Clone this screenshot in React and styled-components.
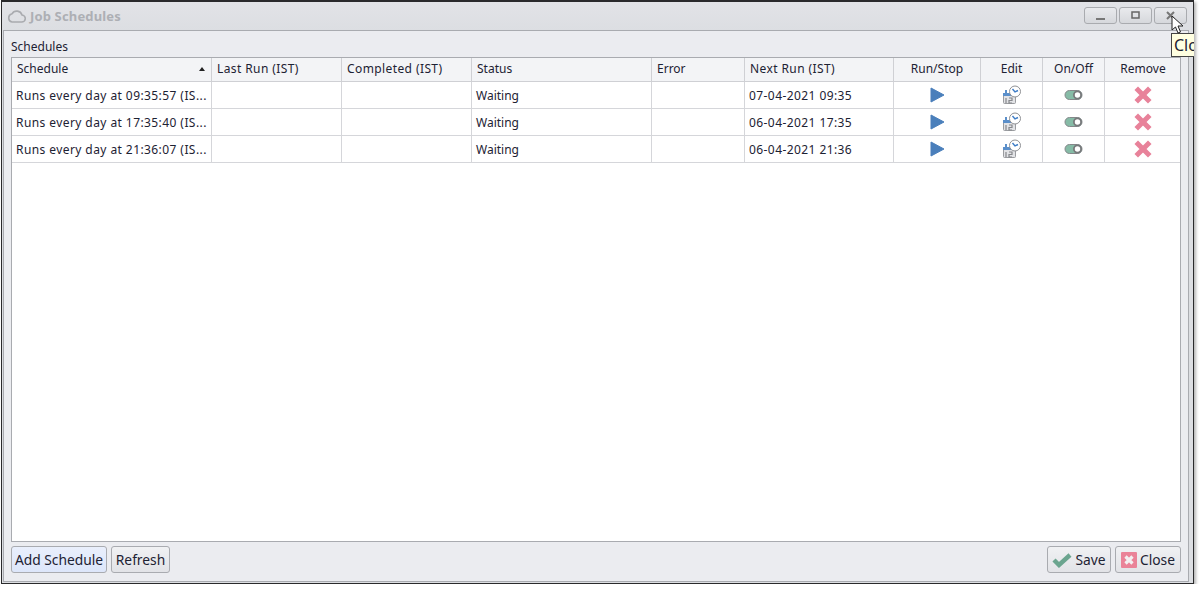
import React from 'react'
import styled, { createGlobalStyle } from 'styled-components'

const columns = [
  { label: 'Schedule', width: 200, sort: true },
  { label: 'Last Run (IST)', width: 130, spaced: true },
  { label: 'Completed (IST)', width: 130, spaced: true },
  { label: 'Status', width: 180 },
  { label: 'Error', width: 93 },
  { label: 'Next Run (IST)', width: 149, spaced: true },
  { label: 'Run/Stop', width: 87, center: true },
  { label: 'Edit', width: 62, center: true },
  { label: 'On/Off', width: 62, center: true },
  { label: 'Remove', width: 76, center: true },
]

const rows = [
  { schedule: 'Runs every day at 09:35:57 (IS...', next: '07-04-2021 09:35' },
  { schedule: 'Runs every day at 17:35:40 (IS...', next: '06-04-2021 17:35' },
  { schedule: 'Runs every day at 21:36:07 (IS...', next: '06-04-2021 21:36' },
]

const PlayIcon = () => (
  <svg width="16" height="16" viewBox="0 0 16 16">
    <path d="M2 1 L15 8 L2 15 Z" fill="#4a7fbb" stroke="#4a7fbb" strokeLinejoin="round" />
  </svg>
)

const EditIcon = () => (
  <svg width="20" height="20" viewBox="0 0 20 20">
    <rect x="1.5" y="9.5" width="12" height="9" rx="1" fill="#e2e3e6" stroke="#9a9ca0" />
    <rect x="1" y="8" width="8" height="3" fill="#5b8fca" />
    <rect x="3" y="5" width="2" height="5" fill="#5b8fca" />
    <path d="M4 13v5M7 13h3v2.5H7V18h3" fill="none" stroke="#85878b" strokeWidth="1.2" />
    <circle cx="13" cy="6.5" r="5.5" fill="#fff" stroke="#8e9094" />
    <path d="M10.5 4 L13 7 L16 5.5" fill="none" stroke="#3d7cc6" strokeWidth="1.4" />
  </svg>
)

const ToggleIcon = () => (
  <svg width="20" height="12" viewBox="0 0 20 12">
    <rect x="1" y="1.5" width="17" height="9" rx="4.5" fill="#86bba6" stroke="#85878a" />
    <circle cx="13.5" cy="6" r="3.6" fill="#fff" stroke="#77797b" strokeWidth="1.8" />
  </svg>
)

const RemoveIcon = () => (
  <svg width="18" height="18" viewBox="0 0 18 18">
    <path d="M4 4 L14 14 M14 4 L4 14" stroke="#e8829a" strokeWidth="5" strokeLinecap="square" />
  </svg>
)

const CheckIcon = () => (
  <svg width="20" height="16" viewBox="0 0 20 16">
    <path d="M2 8 L7 13 L18 3" fill="none" stroke="#6ba58f" strokeWidth="4.4" />
  </svg>
)

const CloseBoxIcon = () => (
  <svg width="16" height="16" viewBox="0 0 16 16">
    <rect width="16" height="16" rx="1" fill="#ea8398" />
    <path d="M4.5 4.5 L11.5 11.5 M11.5 4.5 L4.5 11.5" stroke="#f3f0f1" strokeWidth="3.2" />
  </svg>
)

const App = () => {
  return (
    <>
      <GlobalStyle />
      <Window>
        <TitleBar>
          <TitleLeft>
            <svg width="19" height="14" viewBox="0 0 19 14">
              <path d="M5 13 H14.5 A3.5 3.5 0 0 0 15 6 A5.5 5.5 0 0 0 5 4.8 A4.2 4.2 0 0 0 5 13 Z" fill="none" stroke="#a9abaf" strokeWidth="1.6" />
            </svg>
            <Title>Job Schedules</Title>
          </TitleLeft>
          <WindowButtons>
            <WindowButton $width={33}>
              <svg width="9" height="9" viewBox="0 0 9 9"><rect x="0" y="7" width="9" height="2" fill="#777" /></svg>
            </WindowButton>
            <WindowButton $width={33}>
              <svg width="9" height="9" viewBox="0 0 9 9"><rect x="1" y="1" width="7" height="6" fill="none" stroke="#666" strokeWidth="1.5" /></svg>
            </WindowButton>
            <WindowButton $width={33}>
              <svg width="9" height="9" viewBox="0 0 9 9"><path d="M1 1 L8 8 M8 1 L1 8" stroke="#777" strokeWidth="2" /></svg>
            </WindowButton>
          </WindowButtons>
        </TitleBar>

        <Panel>
          <PanelLabel>Schedules</PanelLabel>
          <Table>
            <HeaderRow>
              {columns.map((col) => (
                <HeaderCell key={col.label} $width={col.width} $center={col.center} $spaced={col.spaced}>
                  {col.label}
                  {col.sort && <SortArrow />}
                </HeaderCell>
              ))}
            </HeaderRow>
            {rows.map((row) => (
              <Row key={row.schedule}>
                <Cell $width={200} $spaced>{row.schedule}</Cell>
                <Cell $width={130} />
                <Cell $width={130} />
                <Cell $width={180}>Waiting</Cell>
                <Cell $width={93} />
                <Cell $width={149} $spaced>{row.next}</Cell>
                <Cell $width={87} $center><PlayIcon /></Cell>
                <Cell $width={62} $center><EditIcon /></Cell>
                <Cell $width={62} $center><ToggleIcon /></Cell>
                <Cell $width={76} $center><RemoveIcon /></Cell>
              </Row>
            ))}
          </Table>
          <Footer>
            <ButtonGroup>
              <Button $width={96} $focused>Add Schedule</Button>
              <Button $width={59}>Refresh</Button>
            </ButtonGroup>
            <ButtonGroup>
              <Button $width={64}><CheckIcon />Save</Button>
              <Button $width={66}><CloseBoxIcon />Close</Button>
            </ButtonGroup>
          </Footer>
        </Panel>

        <Tooltip>Clo</Tooltip>
        <Cursor>
          <svg width="14" height="20" viewBox="0 0 14 20">
            <path d="M1 1 V15 L4.5 12 L7 18 L9.5 17 L7 11 H12 Z" fill="#fff" stroke="#222" strokeWidth="1" />
          </svg>
        </Cursor>
      </Window>
    </>
  )
}

export default App

const GlobalStyle = createGlobalStyle`
  html, body {
    margin: 0;
    padding: 0;
    background-color: #fff;
    overflow: hidden;
  }
  body {
    font-family: "Noto Sans", "Open Sans", sans-serif;
    color: #1d2233;
  }
  * {
    box-sizing: border-box;
  }
`

const Window = styled.div`
  position: relative;
  width: 1193px;
  height: 584px;
  margin: 0 0 0 1px;
  border: 1px solid #2a2a2c;
  border-top-width: 2px;
  background-color: #dcdee2;
  box-shadow: 2px 2px 3px #b5b5b5;
  display: flex;
  flex-direction: column;
`

const TitleBar = styled.div`
  height: 28px;
  display: flex;
  justify-content: space-between;
  align-items: center;
  padding: 0 6px 0 5px;
  background: linear-gradient(#e2e3e7, #dcdee2);
`

const TitleLeft = styled.div`
  display: flex;
  align-items: center;
  gap: 4px;
`

const Title = styled.div`
  font-size: 13px;
  letter-spacing: 0.15px;
  font-weight: 700;
  color: #adafb4;
`

const WindowButtons = styled.div`
  display: flex;
  gap: 2px;
  margin-bottom: 2px;
`

const WindowButton = styled.div`
  width: ${(p) => p.$width}px;
  height: 17px;
  display: flex;
  align-items: center;
  justify-content: center;
  border: 1px solid #a9abaf;
  border-radius: 3px;
  background: linear-gradient(#e9eaed, #d6d8dc);
`

const Panel = styled.div`
  flex: 1;
  margin: 0 4px 1px 1px;
  border: 1px solid #a9abb0;
  background-color: #ebecf0;
  padding: 0 7px;
  display: flex;
  flex-direction: column;
`

const PanelLabel = styled.div`
  height: 26px;
  padding: 7px 0 0 0;
  font-size: 12px;
  line-height: 17px;
`

const Table = styled.div`
  width: 1170px;
  height: 485px;
  border: 1px solid #a9abb0;
  background-color: #fff;
  flex-shrink: 0;
`

const HeaderRow = styled.div`
  display: flex;
  height: 24px;
  background-color: #f3f4f6;
  border-bottom: 1px solid #cfd0d4;
`

const HeaderCell = styled.div`
  position: relative;
  width: ${(p) => p.$width}px;
  flex-shrink: 0;
  padding: 0 5px;
  font-size: 12px;
  line-height: 22px;
  letter-spacing: ${(p) => (p.$spaced ? '0.4px' : '0')};
  text-align: ${(p) => (p.$center ? 'center' : 'left')};
  border-right: 1px solid #cfd0d4;

  &:last-child {
    border-right: none;
  }
`

const SortArrow = styled.span`
  position: absolute;
  right: 6px;
  top: 9px;
  width: 0;
  height: 0;
  border-left: 3.5px solid transparent;
  border-right: 3.5px solid transparent;
  border-bottom: 4px solid #222;
`

const Row = styled.div`
  display: flex;
  height: 27px;
  border-bottom: 1px solid #d5d6da;
`

const Cell = styled.div`
  width: ${(p) => p.$width}px;
  flex-shrink: 0;
  padding: 0 4px;
  display: flex;
  align-items: center;
  justify-content: ${(p) => (p.$center ? 'center' : 'flex-start')};
  font-size: 12px;
  letter-spacing: ${(p) => (p.$spaced ? '0.42px' : '0')};
  white-space: nowrap;
  overflow: hidden;
  border-right: 1px solid #d5d6da;

  &:last-child {
    border-right: none;
  }
`

const Footer = styled.div`
  display: flex;
  justify-content: space-between;
  width: 1170px;
  padding-top: 4px;
`

const ButtonGroup = styled.div`
  display: flex;
  gap: 4px;
`

const Button = styled.button`
  width: ${(p) => p.$width}px;
  height: 27px;
  padding: 0;
  display: flex;
  align-items: center;
  justify-content: center;
  gap: 3px;
  font-family: inherit;
  font-size: 13.8px;
  white-space: nowrap;
  color: #1d2233;
  border: 1px solid #a9abb0;
  border-radius: 3px;
  background: ${(p) => (p.$focused ? 'linear-gradient(#e9effc, #dde6fa)' : 'linear-gradient(#f0f1f3, #e2e3e7)')};
`

const Tooltip = styled.div`
  position: absolute;
  left: 1169px;
  top: 31px;
  width: 23px;
  height: 24px;
  padding-left: 2px;
  overflow: hidden;
  font-size: 16px;
  line-height: 23px;
  color: #1d2233;
  background-color: #ffffe1;
  border: 1px solid #444;
  border-right: none;
`

const Cursor = styled.div`
  position: absolute;
  left: 1169px;
  top: 13px;
  height: 20px;
`
